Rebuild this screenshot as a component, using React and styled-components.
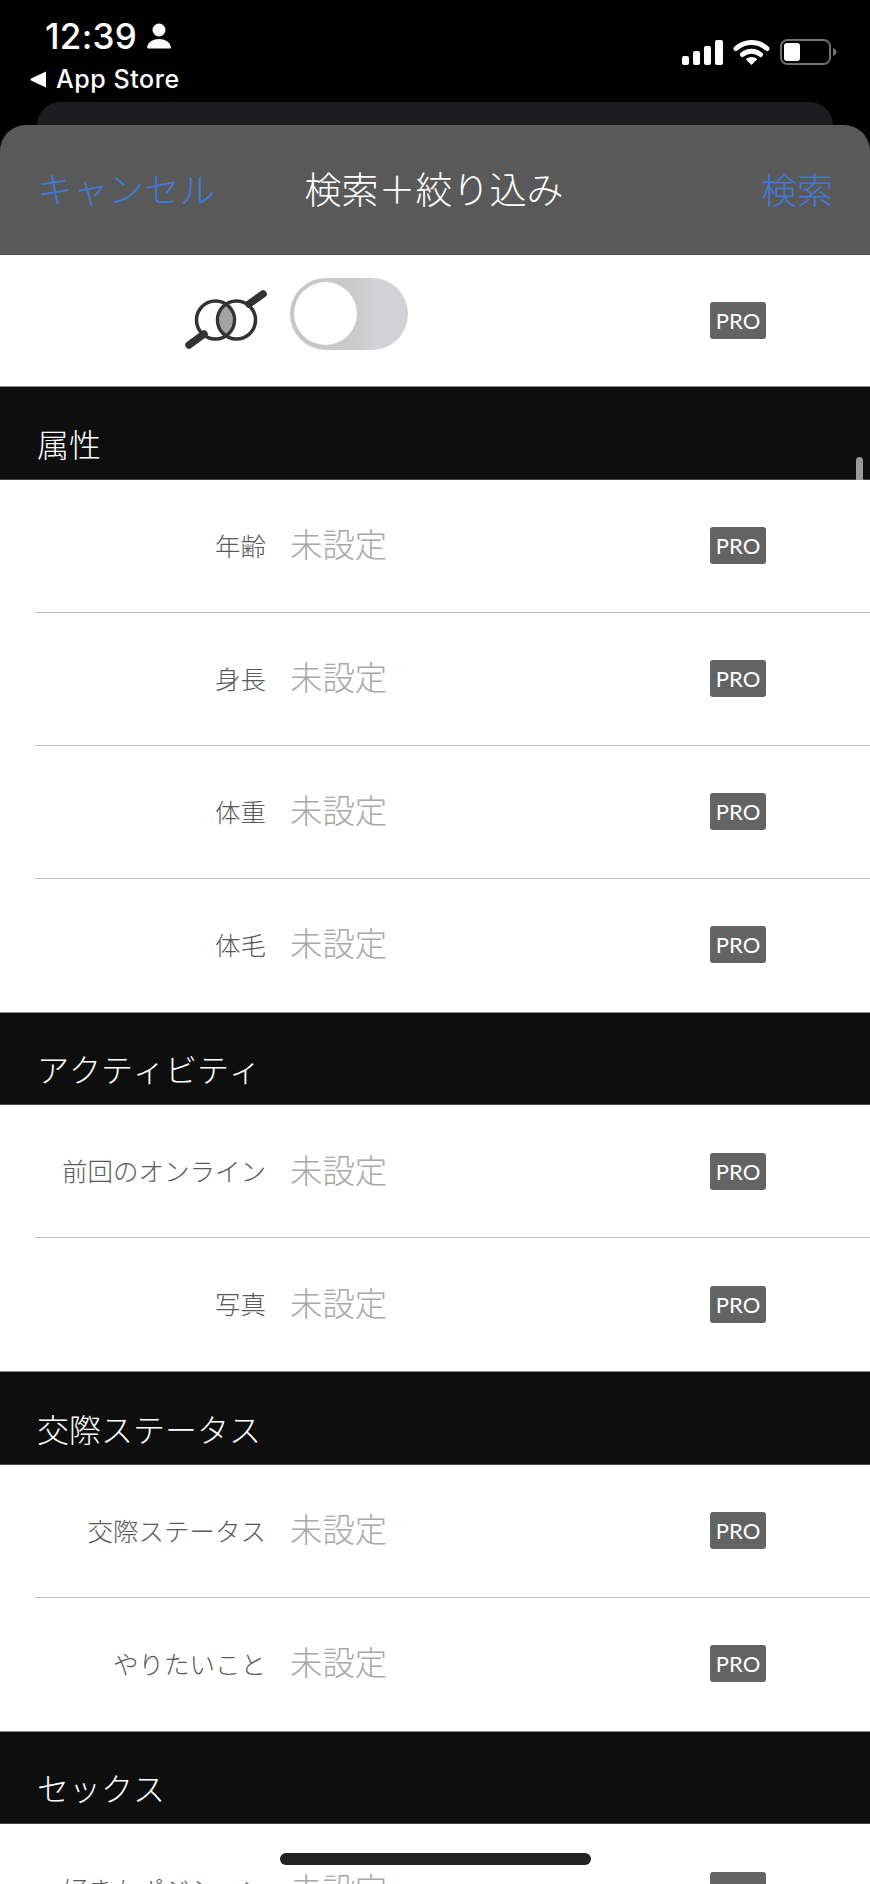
import React from "react";
import styled, { createGlobalStyle } from "styled-components";

const Global = createGlobalStyle`
  html, body { margin: 0; padding: 0; background: #000; }
  body { font-family: "Noto Sans CJK JP", "Noto Sans", sans-serif; font-kerning: none; }
`;

const Page = styled.div`
  position: relative;
  width: 870px;
  height: 1884px;
  overflow: hidden;
  background: #000;
`;

const StatusBar = styled.div`
  display: flex;
  justify-content: space-between;
  height: 102px;
  box-sizing: border-box;
  padding: 15px 32px 0 30px;
  color: #fff;
  font-family: Inter, "Liberation Sans", sans-serif;
`;

const StatusLeft = styled.div`
  display: flex;
  flex-direction: column;
`;

const TimeRow = styled.div`
  display: flex;
  align-items: center;
  gap: 10px;
  height: 42px;
  padding-left: 15px;
`;

const Time = styled.span`
  font-size: 35px;
  font-weight: 500;
  line-height: 42px;
  letter-spacing: 0.3px;
  font-kerning: normal;
`;

const BackRow = styled.div`
  display: flex;
  align-items: center;
  gap: 10px;
  height: 36px;
  margin-top: 4px;
`;

const BackLabel = styled.span`
  font-size: 25px;
  font-weight: 500;
  line-height: 36px;
  letter-spacing: 0.55px;
  font-kerning: normal;
`;

const StatusRight = styled.div`
  display: flex;
  align-items: center;
  gap: 10px;
  height: 26px;
  margin-top: 24px;
  margin-right: 1px;
`;

const BackCard = styled.div`
  height: 23px;
  margin: 0 37px;
  background: #1c1c1e;
  border-radius: 24px 24px 0 0;
`;

const Header = styled.header`
  display: flex;
  align-items: center;
  justify-content: space-between;
  height: 130px;
  box-sizing: border-box;
  padding: 0 37px 3px 37px;
  background: #595959;
  border-radius: 26px 26px 0 0;
  border-bottom: 1px solid #4c4c4c;
`;

const HeaderAction = styled.span`
  width: 180px;
  font-size: ${(p) => (p.$right ? "36px" : "35.7px")};
  font-weight: 300;
  line-height: 50px;
  color: #4379d6;
  text-align: ${(p) => (p.$right ? "right" : "left")};
`;

const Title = styled.span`
  font-size: 37px;
  font-weight: 300;
  line-height: 50px;
  color: #fff;
  margin-left: -2px;
`;

const Row = styled.div`
  position: relative;
  display: flex;
  align-items: center;
  height: 133px;
  box-sizing: border-box;
  background: #fff;
  padding: 0 104px 1px 0;
  &:not(:last-child)::after {
    content: "";
    position: absolute;
    left: 35px;
    right: 0;
    bottom: 0;
    height: 1px;
    background: #c0c0c2;
  }
`;

const ToggleRow = styled(Row)`
  height: 131px;
`;

const Label = styled.span`
  display: flex;
  justify-content: flex-end;
  align-items: center;
  width: 266px;
  flex: none;
  padding-bottom: 3px;
  font-size: 25.5px;
  font-weight: 300;
  color: #5a5a5a;
  white-space: nowrap;
`;

const Value = styled.div`
  flex: 1;
  display: flex;
  align-items: center;
  margin-left: ${(p) => (p.$toggle ? "22px" : "24px")};
  padding-bottom: ${(p) => (p.$toggle ? "13px" : "6px")};
`;

const ValueText = styled.span`
  font-size: 32.4px;
  font-weight: 300;
  color: #a8a8a8;
`;

const Pro = styled.span`
  display: flex;
  align-items: center;
  justify-content: center;
  width: 56px;
  height: 37px;
  background: #636363;
  border-radius: 3px;
  color: #fff;
  font-family: Lato, "Noto Sans", sans-serif;
  font-size: 22px;
  font-weight: 400;
`;

const Section = styled.div`
  display: flex;
  align-items: flex-end;
  height: 93.5px;
  box-sizing: border-box;
  padding: 0 0 14px 37px;
  background: #0e0e0e;
  border-top: 1px solid #8d8d8d;
  border-bottom: 1px solid #4a4a4a;
  color: #fff;
  font-size: 32px;
  font-weight: 300;
  line-height: 44px;
`;

const Toggle = styled.div`
  position: relative;
  width: 118px;
  height: 72px;
  border-radius: 36px;
  background: linear-gradient(90deg, #c6c6c6 0%, #cacaca 55%, #d1d1d6 70%);
`;

const Knob = styled.div`
  position: absolute;
  left: 4px;
  top: 4px;
  width: 63px;
  height: 63px;
  border-radius: 50%;
  background: #fff;
`;

const IconSlot = styled.div`
  display: flex;
  justify-content: flex-end;
  width: 268px;
  flex: none;
  padding-bottom: 3px;
`;

const Scrollbar = styled.div`
  position: absolute;
  left: 856px;
  top: 457px;
  width: 7px;
  height: 23px;
  border-radius: 4px 4px 0 0;
  background: #9a9a9a;
`;

const HomeBar = styled.div`
  position: absolute;
  left: 280px;
  top: 1853px;
  width: 311px;
  height: 12px;
  border-radius: 6px;
  background: #232323;
`;

const Person = () => (
  <svg width="24" height="26" viewBox="0 0 24 26">
    <circle cx="12" cy="7" r="6.5" fill="#fff" />
    <path d="M1 25.5c-1 0-1-1.2-.7-2.2C1.6 19 6 16 12 16s10.400 3 11.700 7.300c.3 1 .3 2.200-.7 2.200z" fill="#fff" />
  </svg>
);

const Signal = () => (
  <svg width="41" height="25" viewBox="0 0 41 25">
    <rect x="0" y="16" width="7" height="9" rx="2" fill="#fff" />
    <rect x="11" y="11" width="7" height="14" rx="2" fill="#fff" />
    <rect x="22" y="6" width="7" height="19" rx="2" fill="#fff" />
    <rect x="33" y="0" width="8" height="25" rx="2" fill="#fff" />
  </svg>
);

const Wifi = () => (
  <svg width="37" height="26" viewBox="0 0 37 26">
    <path d="M3 9.500C12 1.500 25 1.500 34 9.500" fill="none" stroke="#fff" strokeWidth="5" strokeLinecap="round" />
    <path d="M9.500 15.500C14.500 11 22.500 11 27.500 15.500" fill="none" stroke="#fff" strokeWidth="5" strokeLinecap="round" />
    <path d="M18.500 26L12.800 20.200C15.800 17.400 21.200 17.400 24.200 20.200z" fill="#fff" />
  </svg>
);

const Battery = () => (
  <svg width="57" height="26" viewBox="0 0 57 26">
    <rect x="1" y="1" width="49" height="24" rx="6.500" fill="none" stroke="#6f6f6f" strokeWidth="2" />
    <rect x="4" y="4" width="16" height="18" rx="3" fill="#fff" />
    <path d="M53 9c2.500.8 3.500 2.300 3.500 4s-1 3.200-3.500 4z" fill="#6f6f6f" />
  </svg>
);

const BackArrow = () => (
  <svg width="16" height="17" viewBox="0 0 16 17">
    <path d="M16 0.500V16.500L1 9.500Q0 8.500 1 7.500z" fill="#fff" />
  </svg>
);

const VennSearch = () => (
  <svg width="84" height="62" viewBox="0 0 84 62">
    <path d="M42 17.500a19 19 0 0 1 0 29a19 19 0 0 1 0-29z" fill="#a3a3a3" />
    <line x1="5" y1="57" x2="20" y2="46" stroke="#333" strokeWidth="7.500" strokeLinecap="round" />
    <line x1="65" y1="16" x2="79" y2="6" stroke="#333" strokeWidth="7.500" strokeLinecap="round" />
    <circle cx="31.500" cy="32" r="19" fill="none" stroke="#333" strokeWidth="3.500" />
    <circle cx="52.500" cy="32" r="19" fill="none" stroke="#333" strokeWidth="3.500" />
  </svg>
);

const FieldRow = ({ label }) => (
  <Row>
    <Label>{label}</Label>
    <Value>
      <ValueText>未設定</ValueText>
    </Value>
    <Pro>PRO</Pro>
  </Row>
);

const groups = [
  { title: "属性", rows: ["年齢", "身長", "体重", "体毛"] },
  { title: "アクティビティ", rows: ["前回のオンライン", "写真"] },
  { title: "交際ステータス", rows: ["交際ステータス", "やりたいこと"] },
  { title: "セックス", rows: ["好きなポジション"] },
];

export default function App() {
  return (
    <Page>
      <Global />
      <StatusBar>
        <StatusLeft>
          <TimeRow>
            <Time>12:39</Time>
            <Person />
          </TimeRow>
          <BackRow>
            <BackArrow />
            <BackLabel>App Store</BackLabel>
          </BackRow>
        </StatusLeft>
        <StatusRight>
          <Signal />
          <Wifi />
          <Battery />
        </StatusRight>
      </StatusBar>
      <BackCard />
      <Header>
        <HeaderAction>キャンセル</HeaderAction>
        <Title>検索＋絞り込み</Title>
        <HeaderAction $right>検索</HeaderAction>
      </Header>
      <div>
        <ToggleRow>
          <IconSlot>
            <VennSearch />
          </IconSlot>
          <Value $toggle>
            <Toggle>
              <Knob />
            </Toggle>
          </Value>
          <Pro>PRO</Pro>
        </ToggleRow>
      </div>
      {groups.map((g) => (
        <React.Fragment key={g.title}>
          <Section>{g.title}</Section>
          <div>
            {g.rows.map((r) => (
              <FieldRow key={r} label={r} />
            ))}
          </div>
        </React.Fragment>
      ))}
      <Scrollbar />
      <HomeBar />
    </Page>
  );
}
